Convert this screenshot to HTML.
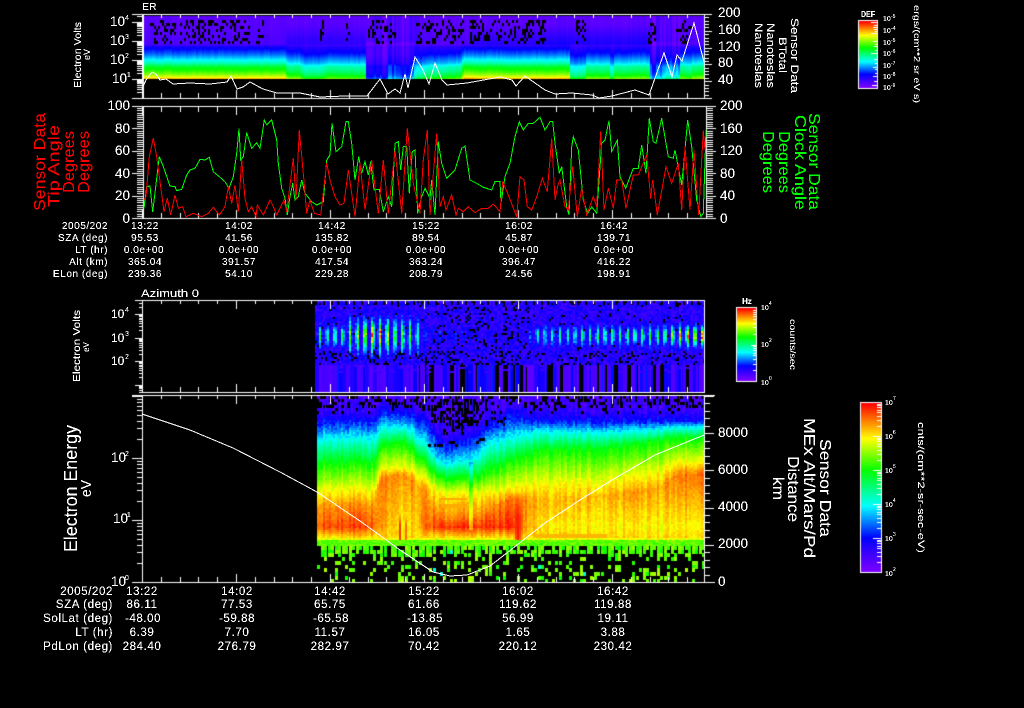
<!DOCTYPE html>
<html><head><meta charset="utf-8"><title>Sensor Data</title>
<style>
html,body{margin:0;padding:0;background:#000;width:1024px;height:708px;overflow:hidden}
#c,#s{position:absolute;left:0;top:0}
text{font-family:"Liberation Sans",sans-serif;fill:#fff}
.r{fill:#f00}.g{fill:#0f0}
.a{text-anchor:end}.m{text-anchor:middle}
.t2{font-size:10px;letter-spacing:.55px}.t4{font-size:11.5px;letter-spacing:.6px}
.n{font-size:13.5px}.e{font-size:7px}.p{font-size:7px}
</style></head><body>
<canvas id="c" width="1024" height="708"></canvas>
<svg id="s" width="1024" height="708" viewBox="0 0 1024 708" xmlns="http://www.w3.org/2000/svg">
<defs><filter id="b" x="0" y="0" width="1024" height="708" filterUnits="userSpaceOnUse"><feComponentTransfer><feFuncA type="discrete" tableValues="0 0 0 1 1 1 1 1"/></feComponentTransfer></filter></defs>
<g id="lines" fill="none" shape-rendering="crispEdges"></g>
<g filter="url(#b)">
<text x="142" y="10" font-size="10.5">ER</text>
<text x="141" y="297" font-size="11" textLength="58" lengthAdjust="spacingAndGlyphs">Azimuth 0</text>

<text class="n" x="110" y="26">10</text><text class="p" x="125" y="20">4</text>
<text class="n" x="110" y="45">10</text><text class="p" x="125" y="39">3</text>
<text class="n" x="110" y="64">10</text><text class="p" x="125" y="58">2</text>
<text class="n" x="112" y="83">10</text><text class="p" x="127" y="77">1</text>
<text class="n a" x="130" y="110">100</text><text class="n a" x="130" y="133">80</text><text class="n a" x="130" y="155">60</text><text class="n a" x="130" y="178">40</text><text class="n a" x="130" y="200">20</text><text class="n a" x="130" y="223">0</text>
<text class="n" x="718" y="17">200</text><text class="n" x="718" y="34">160</text><text class="n" x="718" y="51">120</text><text class="n" x="718" y="67">80</text><text class="n" x="718" y="84">40</text>
<text class="n" x="720" y="110">200</text><text class="n" x="720" y="133">160</text><text class="n" x="720" y="155">120</text><text class="n" x="720" y="178">80</text><text class="n" x="720" y="200">40</text><text class="n" x="720" y="223">0</text>

<text font-size="10" transform="translate(81,88) rotate(-90)" textLength="66" lengthAdjust="spacingAndGlyphs">Electron Volts</text>
<text font-size="9" transform="translate(90,60) rotate(-90)">eV</text>

<text class="r" font-size="16" transform="translate(45,211) rotate(-90)" textLength="98" lengthAdjust="spacingAndGlyphs">Sensor Data</text>
<text class="r" font-size="16" transform="translate(59,207) rotate(-90)" textLength="82" lengthAdjust="spacingAndGlyphs">Tip Angle</text>
<text class="r" font-size="16" transform="translate(74,193) rotate(-90)" textLength="62" lengthAdjust="spacingAndGlyphs">Degrees</text>
<text class="r" font-size="16" transform="translate(89,193) rotate(-90)" textLength="62" lengthAdjust="spacingAndGlyphs">Degrees</text>

<text font-size="11" transform="translate(791,18) rotate(90)" textLength="75" lengthAdjust="spacingAndGlyphs">Sensor Data</text>
<text font-size="11" transform="translate(779,37) rotate(90)" textLength="36" lengthAdjust="spacingAndGlyphs">BTotal</text>
<text font-size="11" transform="translate(767,23) rotate(90)" textLength="65" lengthAdjust="spacingAndGlyphs">Nanoteslas</text>
<text font-size="11" transform="translate(755,23) rotate(90)" textLength="65" lengthAdjust="spacingAndGlyphs">Nanoteslas</text>

<text class="g" font-size="16" transform="translate(809,113) rotate(90)" textLength="97" lengthAdjust="spacingAndGlyphs">Sensor Data</text>
<text class="g" font-size="16" transform="translate(795,115) rotate(90)" textLength="95" lengthAdjust="spacingAndGlyphs">Clock Angle</text>
<text class="g" font-size="16" transform="translate(779,131) rotate(90)" textLength="62" lengthAdjust="spacingAndGlyphs">Degrees</text>
<text class="g" font-size="16" transform="translate(763,131) rotate(90)" textLength="62" lengthAdjust="spacingAndGlyphs">Degrees</text>

<text x="861" y="17" font-size="8.5" font-weight="bold" textLength="14" lengthAdjust="spacingAndGlyphs">DEF</text>
<text class="e" x="883" y="21">10</text><text class="p" x="891" y="18" style="font-size:5px">-5</text>
<text class="e" x="883" y="33">10</text><text class="p" x="891" y="30" style="font-size:5px">-4</text>
<text class="e" x="883" y="45">10</text><text class="p" x="891" y="42" style="font-size:5px">-5</text>
<text class="e" x="883" y="56">10</text><text class="p" x="891" y="53" style="font-size:5px">-6</text>
<text class="e" x="883" y="68">10</text><text class="p" x="891" y="65" style="font-size:5px">-7</text>
<text class="e" x="883" y="79">10</text><text class="p" x="891" y="76" style="font-size:5px">-8</text>
<text class="e" x="883" y="90">10</text><text class="p" x="891" y="87" style="font-size:5px">-9</text>
<text font-size="8.5" transform="translate(914,5) rotate(90)" textLength="98" lengthAdjust="spacingAndGlyphs">ergs/(cm**2 sr eV s)</text>

<text class="t2 a" x="108" y="229">2005/202</text><text class="t2 m" x="145" y="229">13:22</text><text class="t2 m" x="239" y="229">14:02</text><text class="t2 m" x="332" y="229">14:42</text><text class="t2 m" x="426" y="229">15:22</text><text class="t2 m" x="519" y="229">16:02</text><text class="t2 m" x="614" y="229">16:42</text>
<text class="t2 a" x="108" y="241">SZA (deg)</text><text class="t2 m" x="145" y="241">95.53</text><text class="t2 m" x="239" y="241">41.56</text><text class="t2 m" x="332" y="241">135.82</text><text class="t2 m" x="426" y="241">89.54</text><text class="t2 m" x="519" y="241">45.87</text><text class="t2 m" x="614" y="241">139.71</text>
<text class="t2 a" x="108" y="253">LT (hr)</text><text class="t2 m" x="144" y="253">0.0e+00</text><text class="t2 m" x="239" y="253">0.0e+00</text><text class="t2 m" x="332" y="253">0.0e+00</text><text class="t2 m" x="426" y="253">0.0e+00</text><text class="t2 m" x="519" y="253">0.0e+00</text><text class="t2 m" x="614" y="253">0.0e+00</text>
<text class="t2 a" x="108" y="265">Alt (km)</text><text class="t2 m" x="145" y="265">365.04</text><text class="t2 m" x="239" y="265">391.57</text><text class="t2 m" x="332" y="265">417.54</text><text class="t2 m" x="426" y="265">363.24</text><text class="t2 m" x="519" y="265">396.47</text><text class="t2 m" x="614" y="265">416.22</text>
<text class="t2 a" x="108" y="277">ELon (deg)</text><text class="t2 m" x="145" y="277">239.36</text><text class="t2 m" x="239" y="277">54.10</text><text class="t2 m" x="332" y="277">229.28</text><text class="t2 m" x="426" y="277">208.79</text><text class="t2 m" x="519" y="277">24.56</text><text class="t2 m" x="614" y="277">198.91</text>

<text class="n" x="111" y="318" style="font-size:12px">10</text><text class="p" x="125" y="312">4</text>
<text class="n" x="111" y="342" style="font-size:12px">10</text><text class="p" x="125" y="336">3</text>
<text class="n" x="111" y="365" style="font-size:12px">10</text><text class="p" x="125" y="359">2</text>
<text font-size="10" transform="translate(80,382) rotate(-90)" textLength="72" lengthAdjust="spacingAndGlyphs">Electron Volts</text>
<text font-size="8" transform="translate(89,352) rotate(-90)">eV</text>

<text x="742" y="304" font-size="8" font-weight="bold">Hz</text>
<text class="e" x="761" y="310">10</text><text class="p" x="769" y="305" style="font-size:5px">4</text>
<text class="e" x="761" y="347">10</text><text class="p" x="769" y="342" style="font-size:5px">2</text>
<text class="e" x="761" y="385">10</text><text class="p" x="769" y="380" style="font-size:5px">0</text>
<text font-size="8" transform="translate(790,319) rotate(90)" textLength="51" lengthAdjust="spacingAndGlyphs">counts/sec</text>

<text class="e" x="885" y="405">10</text><text class="p" x="893" y="400" style="font-size:5px">7</text>
<text class="e" x="885" y="439">10</text><text class="p" x="893" y="434" style="font-size:5px">6</text>
<text class="e" x="885" y="473">10</text><text class="p" x="893" y="468" style="font-size:5px">5</text>
<text class="e" x="885" y="507">10</text><text class="p" x="893" y="502" style="font-size:5px">4</text>
<text class="e" x="885" y="541">10</text><text class="p" x="893" y="536" style="font-size:5px">3</text>
<text class="e" x="885" y="576">10</text><text class="p" x="893" y="571" style="font-size:5px">2</text>
<text font-size="9" transform="translate(918,422) rotate(90)" textLength="131" lengthAdjust="spacingAndGlyphs">cnts/(cm**2-sr-sec-eV)</text>

<text class="n" x="111" y="462">10</text><text class="p" x="125" y="456">2</text>
<text class="n" x="113" y="523">10</text><text class="p" x="127" y="517">1</text>
<text class="n" x="111" y="586">10</text><text class="p" x="125" y="580">0</text>
<text class="n" x="718" y="437">8000</text><text class="n" x="718" y="474">6000</text><text class="n" x="718" y="511">4000</text><text class="n" x="718" y="548">2000</text><text class="n" x="718" y="586">0</text>
<text font-size="18" transform="translate(77,552) rotate(-90)" textLength="127" lengthAdjust="spacingAndGlyphs">Electron Energy</text>
<text font-size="15" transform="translate(91,497) rotate(-90)" textLength="17" lengthAdjust="spacingAndGlyphs">eV</text>
<text font-size="16" transform="translate(820,439) rotate(90)" textLength="98" lengthAdjust="spacingAndGlyphs">Sensor Data</text>
<text font-size="16" transform="translate(804,418) rotate(90)" textLength="140" lengthAdjust="spacingAndGlyphs">MEx Alt/Mars/Pd</text>
<text font-size="16" transform="translate(788,456) rotate(90)" textLength="66" lengthAdjust="spacingAndGlyphs">Distance</text>
<text font-size="16" transform="translate(773,477) rotate(90)" textLength="23" lengthAdjust="spacingAndGlyphs">km</text>

<text class="t4 a" x="113" y="595">2005/202</text><text class="t4 m" x="142" y="595">13:22</text><text class="t4 m" x="237" y="595">14:02</text><text class="t4 m" x="330" y="595">14:42</text><text class="t4 m" x="424" y="595">15:22</text><text class="t4 m" x="518" y="595">16:02</text><text class="t4 m" x="613" y="595">16:42</text>
<text class="t4 a" x="113" y="608">SZA (deg)</text><text class="t4 m" x="142" y="608">86.11</text><text class="t4 m" x="237" y="608">77.53</text><text class="t4 m" x="330" y="608">65.75</text><text class="t4 m" x="424" y="608">61.66</text><text class="t4 m" x="518" y="608">119.62</text><text class="t4 m" x="613" y="608">119.88</text>
<text class="t4 a" x="113" y="622">SolLat (deg)</text><text class="t4 m" x="143" y="622">-48.00</text><text class="t4 m" x="237" y="622">-59.88</text><text class="t4 m" x="331" y="622">-65.58</text><text class="t4 m" x="425" y="622">-13.85</text><text class="t4 m" x="518" y="622">56.99</text><text class="t4 m" x="613" y="622">19.11</text>
<text class="t4 a" x="113" y="636">LT (hr)</text><text class="t4 m" x="142" y="636">6.39</text><text class="t4 m" x="237" y="636">7.70</text><text class="t4 m" x="330" y="636">11.57</text><text class="t4 m" x="424" y="636">16.05</text><text class="t4 m" x="518" y="636">1.65</text><text class="t4 m" x="613" y="636">3.88</text>
<text class="t4 a" x="113" y="650">PdLon (deg)</text><text class="t4 m" x="142" y="650">284.40</text><text class="t4 m" x="237" y="650">276.79</text><text class="t4 m" x="330" y="650">282.97</text><text class="t4 m" x="424" y="650">70.42</text><text class="t4 m" x="518" y="650">220.12</text><text class="t4 m" x="613" y="650">230.42</text>
</g>
</svg>
<script>
(function(){
var cv=document.getElementById('c'),x=cv.getContext('2d');
x.fillStyle='#000';x.fillRect(0,0,1024,708);
var sd=12345;function R(){sd|=0;sd=sd+0x6D2B79F5|0;var t=Math.imul(sd^sd>>>15,1|sd);t=t+Math.imul(t^t>>>7,61|t)^t;return((t^t>>>14)>>>0)/4294967296}
var st=[[0,[125,0,255]],[.2,[0,0,255]],[.39,[0,255,255]],[.6,[0,255,0]],[.79,[255,255,0]],[1,[255,0,0]]];
function cm(v){v=Math.max(0,Math.min(1,v));for(var i=1;i<st.length;i++)if(v<=st[i][0]){var a=st[i-1],b=st[i],f=(v-a[0])/(b[0]-a[0]);return'rgb('+[0,1,2].map(function(k){return Math.round(a[1][k]+(b[1][k]-a[1][k])*f)}).join(',')+')'}return'#f00'}
function lerp(T,p){if(p<=T[0][0])return T[0].slice(1);for(var i=1;i<T.length;i++)if(p<=T[i][0]){var a=T[i-1],b=T[i],f=(p-a[0])/(b[0]-a[0]);return a.slice(1).map(function(v,k){return v+(b[k+1]-v)*f})}return T[T.length-1].slice(1)}
function f1(v,a,b,w,h){x.fillStyle=cm(v);x.fillRect(a,b,w,h)}
function blk(a,b,w,h){x.fillStyle='#000';x.fillRect(a,b,w,h)}

/* PANEL 1 */
var P1=[[16,.05],[30,.06],[44,.08],[46,.16],[50,.22],[54,.28],[58,.36],[63,.46],[66,.56],[70,.62],[74,.7],[77,.79],[78,.84],[79,.9]];
var S1=[[142,0],[284,-.01],[287,-.13],[298,-.12],[303,-.22],[320,-.22],[326,-.16],[364,-.17],[366,-.6],[385,-.62],[388,-.52],[411,-.56],[414,-.36],[425,-.24],[440,-.2],[460,-.16],[463,.03],[475,.01],[512,0],[568,0],[570,-.26],[584,-.24],[586,-.14],[609,-.14],[611,-.36],[613,-.14],[648,-.14],[650,-.5],[660,-.46],[664,-.36],[678,-.36],[680,-.14],[690,-.2],[692,-.12],[704,-.12]];
var SP=[[150,175],[180,250],[255,262],[320,322],[345,348],[367,395],[415,462],[470,545],[575,585],[648,654],[676,690]];
for(var a=142;a<704;a+=2){
 var s=lerp(S1,a)[0],jit=(R()-.5)*.025;
 if(s<-.3)jit=(R()-.5)*.1;
 var up=(a>285&&a<365||a>470&&a<650)?.06:0; if(a>540&&a<650)up=.09;
 for(var y=16;y<79;y++){
  var r=Math.max(0,Math.min(1,(y-40)/39));
  var v=lerp(P1,y)[0]+s*r+jit;
  if(y<45&&y>24)v+=up*(y-24)/20;
  f1(v,a,y,2,1);
 }
 var sp=false;for(var i=0;i<SP.length;i++)if(a>=SP[i][0]&&a<=SP[i][1])sp=true;
 if(sp)for(var y=20;y<44;y+=3)if(R()<.3)blk(a,y,2,3);
}

/* PANEL 3 */
var A3=[[315,.42],[345,.5],[358,.62],[368,.9],[378,.8],[395,.6],[415,.5],[422,.1],[525,0],[535,.32],[600,.42],[660,.5],[685,.85],[704,.9]];
for(var a=315;a<704;a+=2){
 var k=Math.round((a-320)/7.5),dx=a+1-(320+7.5*k),g=Math.exp(-dx*dx/2.2),A=lerp(A3,a)[0];
 var cy=335,sy=a<345?6:(a<425?10:6);
 for(var y=301;y<365;y+=2){
  var v=.08+R()*.12;
  var dy=y-cy,bv=A*g*Math.exp(-dy*dy/(2*sy*sy))*(.85+R()*.3);
  v+=bv;
  var pb=y<307?(Math.abs(dx)>2.5&&y<305?.9:.05):(y>350?.18:(a>430&&a<530?.12:.03));
  if(y>358)pb=.15;
  if(R()<pb&&bv<.1)blk(a,y,2,2);else f1(v,a,y,2,2);
 }
}
for(var a=315;a<704;){
 var w=1+Math.floor(R()*4),q=R(),dens=a>420?.2:.04;
 if(q<dens)blk(a,365,Math.min(w,3),27);else f1(q<.6?.05+R()*.05:.12+R()*.1,a,365,w,27);
 for(var y=365;y<372;y+=2)if(R()<.15)f1(.1,a,y,w,2);
 a+=w;
}

/* PANEL 4 */
var T4=[[317,420,437,462,490,505,.88,.94],[372,420,437,462,490,505,.88,.94],[380,412,428,447,470,477,.88,.86],[402,412,426,441,467,473,.88,.8],[412,414,431,449,470,480,.88,.82],[428,425,447,466,482,495,.86,.92],[440,445,463,477,493,515,.88,.96],[470,440,460,477,493,515,.88,.96],[490,425,442,470,493,508,.88,.95],[510,415,437,460,488,497,.9,.97],[525,418,433,455,485,500,.88,.86],[540,420,431,450,485,500,.84,.8],[600,420,431,448,482,497,.85,.8],[630,420,430,445,477,492,.87,.8],[660,420,428,440,472,487,.86,.79],[675,420,426,437,462,475,.9,.8],[704,420,426,437,460,473,.92,.8]];
for(var a=317;a<704;a+=2){
 var t=lerp(T4,a),yB=t[0],yC=t[1],yG=t[2],yY=t[3],yO=t[4],pk=t[5],vM=t[6],cj=(R()-.5)*.06;
 var Q=[[396,.08],[yB-10,.12],[yB,.2],[yC,.39],[yG,.6],[yY,.79],[yO,pk],[526,vM],[536,.82],[539,.76]];
 for(var y=396;y<540;y+=2){
  var amp=y<yC?.08:.04;
  var v=lerp(Q,y)[0]+cj+(R()-.5)*amp;
  if(y>510){
   var u=Math.min(1,(y-510)/14);
   var g1=Math.exp(-Math.pow(a+1-400,2)/4),g2=Math.exp(-Math.pow(a+1-406,2)/4);
   v=Math.max(v,(.8+.16*u)*Math.max(g1,g2*.95));
  }
  if(y>495){var g3=Math.exp(-Math.pow(a+1-518,2)/12);v=v+(.98-v)*g3*Math.min(1,(y-495)/20)}
  if(a>=468&&a<=471&&y>460&&y<530)v-=.1;
  if(a>=438&&a<=465&&((y>497&&y<500)||(y>503&&y<507)))v=Math.max(v,.86);
  if(a>=535&&a<=605&&y>=534&&y<537)v=.85;
  f1(v,a,y,2,2);
 }
 for(var y=540;y<546;y++)f1(.62+R()*.1,a,y,2,1);
}
/* speckle at top */
for(var a=317;a<704;a+=3){
 for(var y=396;y<448;y+=3){
  var p=0,ins=(a>425&&a<505)?1:0;
  if(y<408)p=.42; else if(y<414)p=.12;
  if(ins){var c=Math.max(0,1-Math.abs(a-455)/45);p=y<425?.6*c+.2:(y<446?.2*c:.0);}
  if(R()<p)blk(a,y,2+(R()<.5?1:0),3);
 }
}
/* low energy blocks */
for(var y=546;y<582;y+=3.7){
 var dn=y<550?.8:(y<556?.42:.24);
 for(var a=317;a<704;a+=3.5){
  var n=dn;
  if(a>398&&a<408)n=.7;
  if(R()<n){var v=.6+R()*.12;if(y>566&&R()<.5)v=.68+R()*.06;if(R()<.03)v=.42;f1(v,Math.round(a),Math.round(y),3,4)}
 }
}

/* colourbars */
function bar(l,t,w,h){for(var i=0;i<h;i++)f1(1-i/(h-1),l,t+i,w,1);x.fillStyle='#fff';x.fillRect(l-1,t-1,w+2,1);x.fillRect(l-1,t+h,w+2,1);x.fillRect(l-1,t-1,1,h+2);x.fillRect(l+w,t-1,1,h+2)}
bar(859,21,18,67);bar(737,308,19,73);bar(861,403,20,169);
var W=function(a,b,w,h){x.fillStyle='#fff';x.fillRect(a,b,w,h)};
[[1,6],[4,3],[6,4],[8,3],[10,2],[12,6],[20,4],[23,2],[25,3],[29,2],[32,6],[38,3],[42,2],[46,4],[48,2],[52,2],[55,4],[60,3],[64,5]].forEach(function(q){W(877-q[1],21+q[0],q[1],1)});
for(var d=0;d<2;d++){for(var i=1;i<10;i++){var yy=Math.round(381-(d*36.5+Math.log10(i)*36.5));W(756-(i==1?5:3),yy,i==1?5:3,1)}}
for(var d=0;d<5;d++){for(var i=1;i<10;i++){var yy=Math.round(572-(d*34+Math.log10(i)*34));W(881-(i==1?8:4),yy,i==1?8:4,1)}}

/* axes */
function hx(yA,dir,mn,mj){for(var k=0;k<30;k++){var tx=Math.round(142+18.8*k);if(tx>=704)break;var L=k%5==0?mj:mn;if(dir>0)W(tx,yA+1,1,L);else W(tx,yA-L,1,L)}}
function logL(left,yT,yB,y0,dec,mn,mj){for(var d=-2;d<5;d++)for(var i=1;i<10;i++){var yy=Math.round(y0-(d*dec+Math.log10(i)*dec));if(yy<yT||yy>yB)continue;var L=i==1?mj:mn;W(left-L,yy,L,1)}}
/* panel 1 */
W(132,14,580,1);W(132,98,580,1);W(142,14,2,85);W(704,14,1,85);
hx(98,-1,5,8);hx(14,1,3,3);
logL(142,14,98,79,19,5,10);
for(var i=0;i<=25;i++){var yy=Math.round(14+i*3.36);W(704,yy,i%5==0?8:5,1)}
/* panel 2 */
W(132,106,584,1);W(132,218,584,1);W(143,106,1,113);W(706,106,1,113);
hx(218,-1,5,8);hx(106,1,5,8);
for(var i=0;i<=50;i++){var yy=Math.round(106+i*2.24);W(i%10==0?132:137,yy,i%10==0?11:6,1);W(706,yy,i%10==0?10:7,1)}
/* panel 3 */
W(135,300,570,1);W(142,392,562,1);W(142,300,1,93);W(704,300,1,93);
hx(392,-1,5,8);hx(300,1,3,8);
logL(142,300,392,361,23.5,3,7);
/* panel 4 */
W(132,395,583,1);W(132,582,583,1);W(142,395,1,188);W(704,395,1,188);
hx(582,-1,5,8);hx(395,1,3,8);
logL(142,395,582,582,62,5,10);
for(var i=0;i<=25;i++){var yy=Math.round(582-i*7.44);W(704,yy,i%5==0?10:6,1)}

/* curves */
function Z(L,ox,oy){return L.map(function(p){return[ox+p[0]/3,oy+p[1]/3]})}
function poly(pts,col,sw){var e=document.createElementNS('http://www.w3.org/2000/svg','polyline');e.setAttribute('points',pts.map(function(p){return p[0].toFixed(1)+','+p[1].toFixed(1)}).join(' '));e.setAttribute('stroke',col);e.setAttribute('stroke-width',sw||1);document.getElementById('lines').appendChild(e)}
var G6=[[42,325],[50,260],[60,258],[68,335],[88,170],[100,200],[120,258],[135,260],[140,272],[155,268],[170,225],[180,210],[195,205],[210,178],[225,180],[238,172],[250,215],[270,232],[285,245],[297,265],[310,230],[320,160],[327,85],[332,180],[340,170],[350,98],[365,145],[380,128],[390,145],[403,60],[410,75],[425,60],[440,120],[445,190],[455,265],[465,295],[472,345],[480,290],[488,250],[495,300],[505,290],[515,240],[525,280],[545,305],[560,315],[580,305],[590,180],[600,165],[606,70],[618,155],[635,140],[648,65],[655,65],[665,130],[675,240],[686,170],[695,220],[705,185],[715,225],[722,185],[732,270],[748,268],[760,335],[775,290],[785,320],[795,130],[805,125],[812,210],[820,140],[830,140],[838,280],[847,155],[855,150],[863,340],[875,290],[885,265],[900,295]];
var G7=[[35,240],[45,345],[55,125],[65,190],[80,235],[105,210],[125,145],[135,138],[150,240],[170,250],[190,262],[215,270],[225,245],[240,245],[243,310],[255,230],[270,190],[285,110],[298,65],[310,90],[325,70],[340,70],[360,52],[375,90],[390,65],[398,65],[405,130],[418,220],[425,200],[440,320],[447,345],[455,140],[460,110],[475,150],[490,300],[503,340],[515,320],[530,340],[545,130],[555,120],[567,62],[575,155],[592,120],[600,230],[617,265],[640,205],[655,205],[665,135],[678,220],[688,55],[700,125],[708,130],[725,55],[745,170],[760,175],[765,150],[785,255],[803,60],[815,140],[830,300],[843,350],[850,340],[858,90]];
var R6=[[42,300],[48,290],[58,170],[70,115],[80,170],[92,260],[102,335],[112,295],[122,345],[135,285],[145,325],[158,320],[168,350],[190,340],[215,350],[235,340],[250,322],[268,345],[285,320],[295,260],[305,310],[315,255],[325,335],[335,180],[345,295],[355,335],[365,320],[378,350],[382,315],[400,345],[420,300],[430,320],[440,345],[462,300],[470,335],[490,175],[498,300],[508,90],[520,220],[530,340],[540,300],[553,340],[572,345],[590,190],[600,240],[615,290],[630,315],[642,310],[655,210],[675,350],[690,190],[705,330],[725,180],[745,340],[760,180],[775,340],[795,150],[815,340],[832,85],[850,250]];
var R7=[[0,340],[10,180],[22,90],[30,345],[50,100],[60,320],[70,290],[78,330],[95,285],[108,345],[115,325],[130,335],[145,320],[165,338],[185,325],[205,325],[220,312],[240,335],[248,245],[265,285],[290,350],[300,230],[312,240],[322,320],[335,330],[350,290],[367,235],[382,275],[395,115],[405,300],[415,250],[420,240],[435,320],[445,330],[458,200],[472,350],[485,265],[500,345],[520,290],[530,320],[542,95],[552,330],[565,265],[580,325],[590,240],[605,240],[618,325],[640,225],[655,225],[680,165],[692,295],[698,240],[712,345],[738,200],[755,250],[775,190],[785,330],[795,140],[810,330],[822,150],[836,345],[850,92],[855,150]];
poly(Z(G6,130,100).concat(Z(G7,420,100)),'#0f0');
poly(Z(R6,130,100).concat(Z(R7,420,100)),'#f00');
poly([[142,89],[146,80],[152,72],[156,74],[160,80],[166,79],[173,84],[190,83],[210,84],[227,82],[231,76],[237,89],[243,87],[250,82],[263,89],[277,93],[300,93],[320,97],[345,96],[367,96],[380,79],[388,94],[395,89],[400,93],[405,74],[408,88],[415,57],[423,70],[429,84],[435,63],[442,80],[447,85],[467,83],[500,77],[512,80],[516,86],[525,76],[545,90],[555,94],[572,93],[592,95],[599,98],[612,96],[635,90],[649,95],[664,53],[672,77],[677,55],[682,61],[694,23],[704,62]],'#fff');
poly([[142,414],[190,430],[233,448],[280,472],[317,492],[360,521],[400,550],[433,572],[450,576],[467,575],[490,566],[512,549],[545,523],[580,500],[612,480],[655,455],[704,435]],'#fff');
})();
</script>
</body></html>
